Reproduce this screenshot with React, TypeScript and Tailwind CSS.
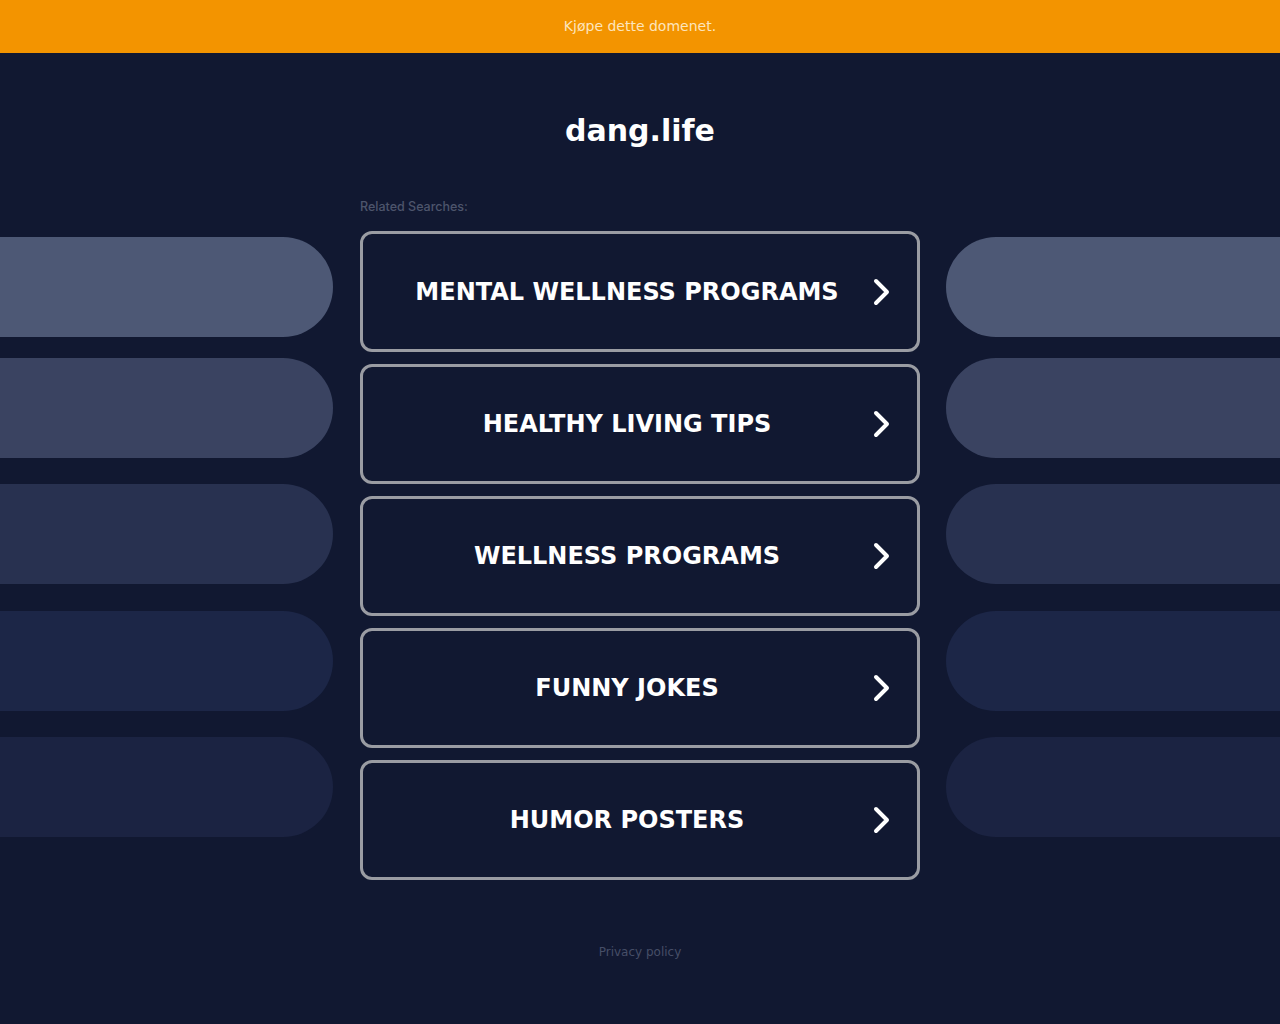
import React from "react";

const items = [
  "MENTAL WELLNESS PROGRAMS",
  "HEALTHY LIVING TIPS",
  "WELLNESS PROGRAMS",
  "FUNNY JOKES",
  "HUMOR POSTERS",
];

const pills = [
  { c: "bg-[#4d5875]", m: "mt-[6px]" },
  { c: "bg-[#3a4361]", m: "mt-[21px]" },
  { c: "bg-[#283150]", m: "mt-[26px]" },
  { c: "bg-[#1c2647]", m: "mt-[27px]" },
  { c: "bg-[#1b2342]", m: "mt-[26px]" },
];

function Chevron() {
  return (
    <svg width="20" height="32" viewBox="0 0 20 32" className="shrink-0 mr-[26px]">
      <path d="M5 5 L16 16 L5 27" fill="none" stroke="#ffffff" strokeWidth="4" strokeLinecap="round" strokeLinejoin="round" />
    </svg>
  );
}

export default function App() {
  return (
    <div className="min-h-[1024px] bg-[#111831] flex flex-col" style={{ fontFamily: '"DejaVu Sans", sans-serif' }}>
      <div className="h-[53px] bg-[#f39400] flex items-center justify-center text-[14px] text-[#fde5bd]">
        Kjøpe dette domenet.
      </div>
      <div className="flex justify-center pt-[58px]">
        <h1 className="text-[30px] font-bold text-white leading-[40px]">dang.life</h1>
      </div>
      <div className="flex mt-[49px]">
        <div className="w-[333px] flex flex-col pt-[31px]">
          {pills.map((p, i) => (
            <div key={i} className={`h-[100px] rounded-r-[50px] ${p.c} ${p.m}`} />
          ))}
        </div>
        <div className="w-[560px] ml-[27px] flex flex-col">
          <div className="text-[12.5px] leading-[14px] font-medium text-[#4d556c] mb-[17px]" style={{ fontFamily: 'Inter, sans-serif' }}>
            Related Searches:
          </div>
          <div className="flex flex-col gap-[12px]">
            {items.map((t, i) => (
              <div
                key={t}
                className={`${i === 0 ? "h-[121px]" : "h-[120px]"} border-[3px] border-[#9a9ca3] rounded-[12px] flex items-center bg-[#111831]`}
              >
                <span className="flex-1 text-center pl-[20px] text-[24px] font-bold text-white">
                  {t}
                </span>
                <Chevron />
              </div>
            ))}
          </div>
        </div>
        <div className="flex-1 ml-[26px] flex flex-col pt-[31px]">
          {pills.map((p, i) => (
            <div key={i} className={`h-[100px] rounded-l-[50px] ${p.c} ${p.m}`} />
          ))}
        </div>
      </div>
      <div className="flex justify-center mt-[63px] text-[12px] text-[#464e67]">Privacy policy</div>
    </div>
  );
}
